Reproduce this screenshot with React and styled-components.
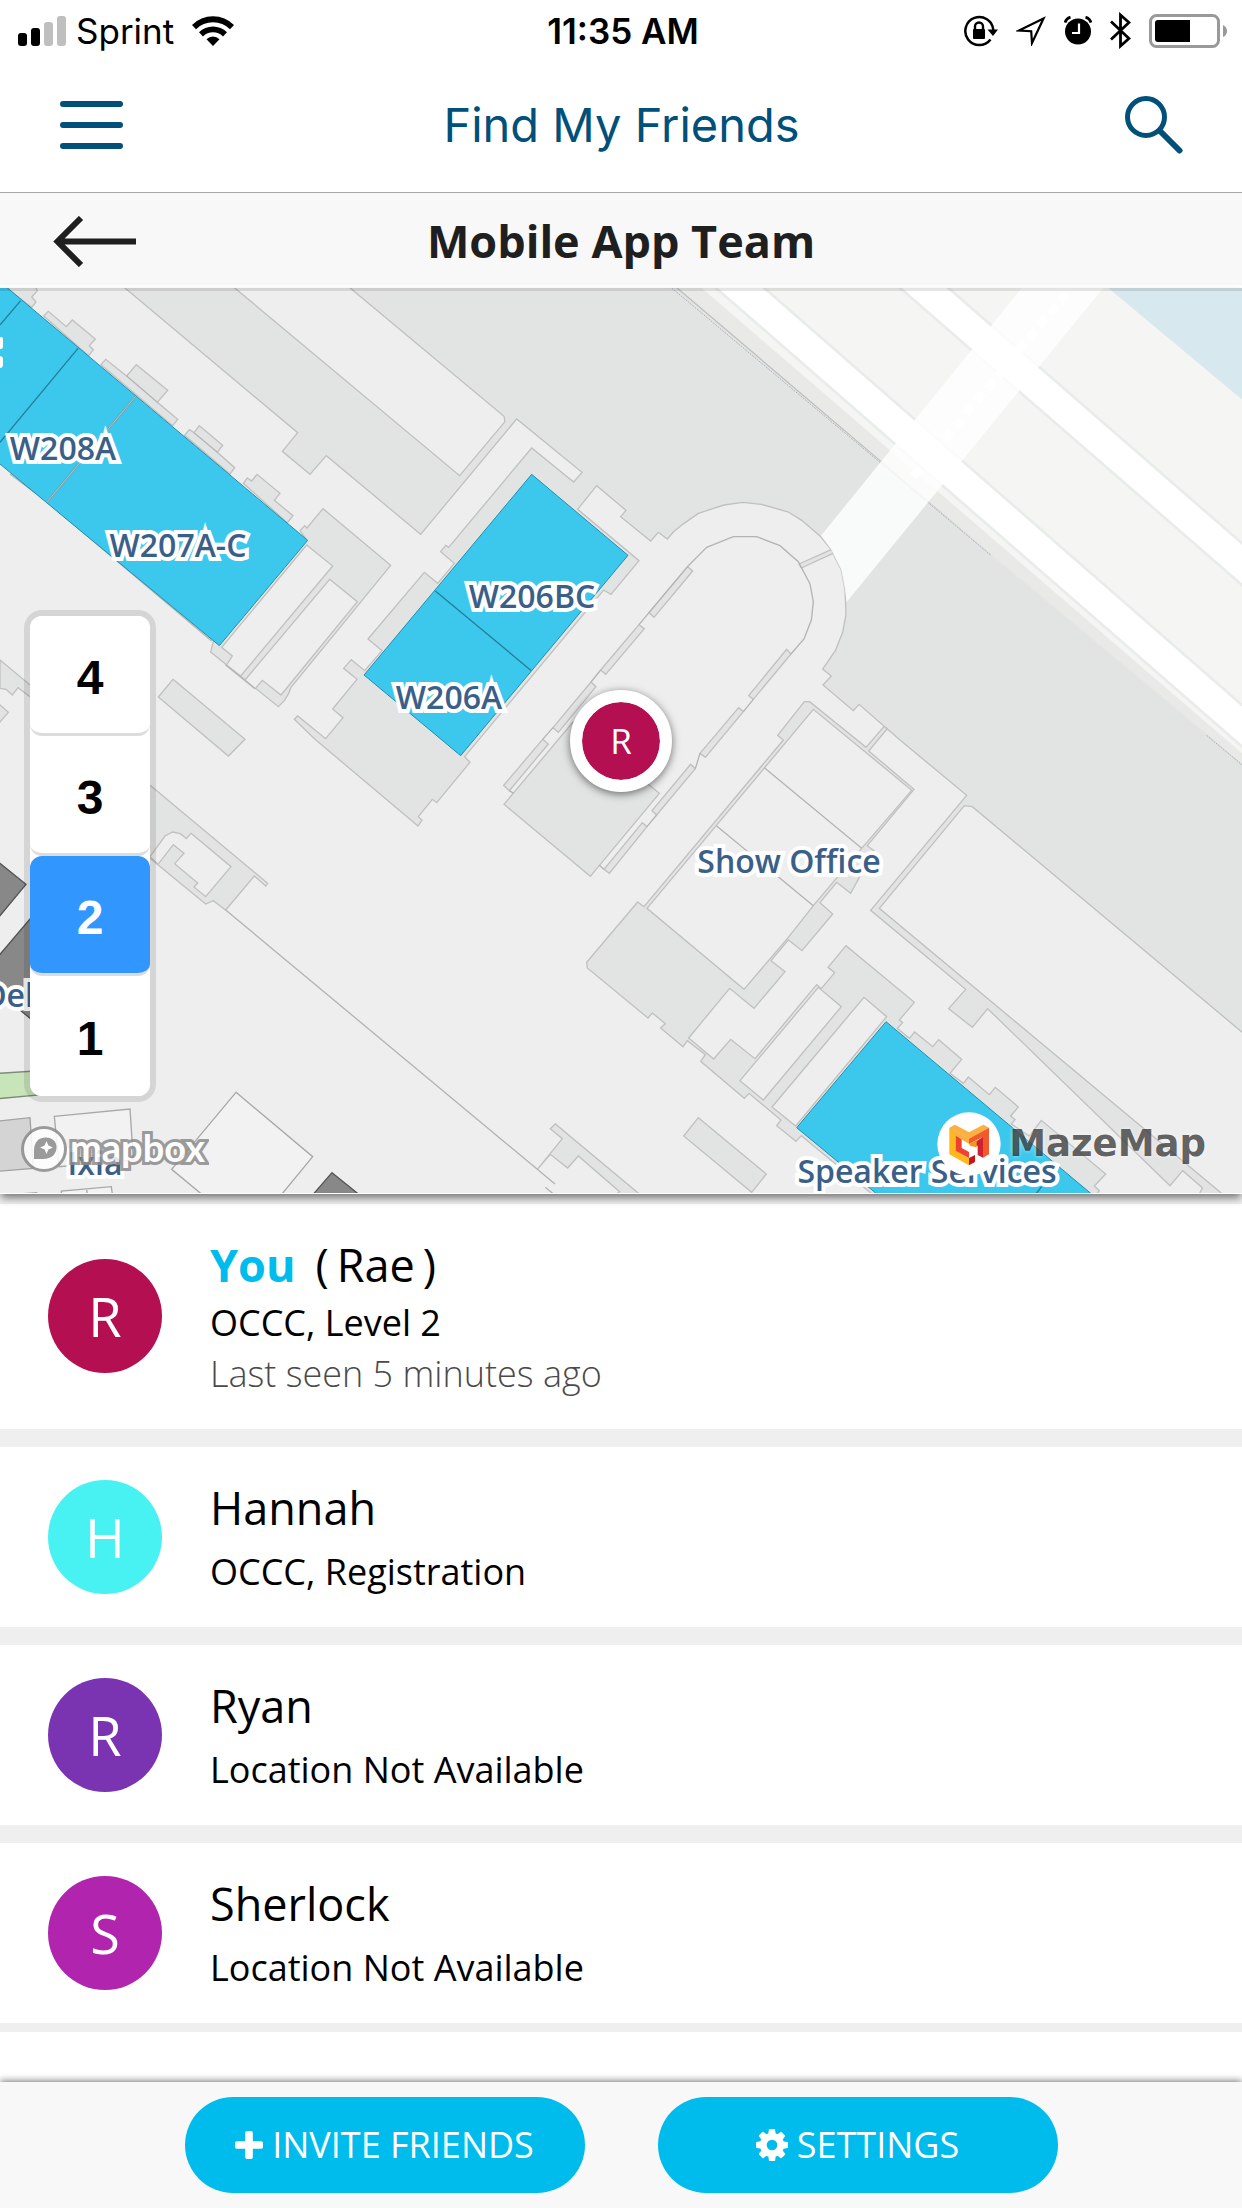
import React, { useState } from "react";
import styled, { createGlobalStyle } from "styled-components";

const GlobalStyle = createGlobalStyle`
  *, *::before, *::after { box-sizing: border-box; }
  html, body { margin: 0; padding: 0; background: #ffffff; }
  body { font-family: "Open Sans", "Noto Sans", sans-serif; color: #000000; }
  button { font: inherit; color: inherit; border: 0; padding: 0; background: none; cursor: pointer; }
  svg { display: block; }
`;

const Screen = styled.div`
  min-height: 100vh;
  display: flex;
  flex-direction: column;
`;

/* ---------- status bar ---------- */

const StatusBar = styled.div`
  height: 57px;
  padding: 4px 14px 0 18px;
  display: grid;
  grid-template-columns: 1fr auto 1fr;
  align-items: center;
  font-family: Inter, Roboto, sans-serif;
  font-size: 35px;
  line-height: 40px;
`;

const StatusGroup = styled.div`
  display: flex;
  align-items: center;
  justify-content: ${(p) => (p.$end ? "flex-end" : "flex-start")};
  gap: ${(p) => p.$gap}px;
`;

const Clock = styled.span`
  font-weight: 600;
`;

const Carrier = styled.span`
  margin: 0 8px 0 0;
`;

/* ---------- headers ---------- */

const AppHeader = styled.header`
  height: 136px;
  padding: 0 59px 0 60px;
  display: grid;
  grid-template-columns: 1fr auto 1fr;
  align-items: center;
  border-bottom: 1px solid #a6a6a6;
  color: #00507a;
`;

const AppTitle = styled.h1`
  margin: 0;
  font-family: Inter, Roboto, sans-serif;
  font-size: 47px;
  line-height: 56px;
  font-weight: 400;
`;

const IconButton = styled.button`
  justify-self: ${(p) => (p.$end ? "end" : "start")};
  display: flex;
`;

const TeamHeader = styled.div`
  height: 95px;
  padding: 4px 53px 0;
  display: grid;
  grid-template-columns: 1fr auto 1fr;
  align-items: center;
  background: #f8f8f8;
  border-bottom: 3px solid #ffffff;
  color: #1f1f1f;
`;

const TeamTitle = styled.h2`
  margin: 0;
  font-size: 45px;
  line-height: 60px;
  font-weight: 700;
`;

/* ---------- map ---------- */

const MapFrame = styled.section`
  position: relative;
  z-index: 1;
  width: 100%;
  aspect-ratio: 1242 / 906;
  box-shadow: 0 5px 8px -1px rgba(0, 0, 0, 0.5);
`;

const MapView = styled.div`
  position: relative;
  width: 100%;
  height: 100%;
  overflow: hidden;
  background: #eeeeee;
  &::after {
    content: "";
    position: absolute;
    inset: 0;
    pointer-events: none;
    border-top: 3px solid rgba(0, 0, 0, 0.1);
    border-bottom: 1px solid #ffffff;
  }
`;

const MapDrawing = styled.svg`
  width: 100%;
  height: 100%;
`;

const RoomLabel = styled.span`
  position: absolute;
  left: ${(p) => p.$x / 12.42}%;
  top: ${(p) => p.$y / 9.06}%;
  transform: translate(-50%, -50%);
  white-space: nowrap;
  font-size: 32px;
  line-height: 44px;
  font-weight: 600;
  color: #3a6089;
  -webkit-text-stroke: 8px #ffffff;
  paint-order: stroke fill;
  stroke-linejoin: round;
`;

const Pin = styled.div`
  position: absolute;
  left: 50%;
  top: 50%;
  width: 102px;
  height: 102px;
  transform: translate(-50%, -50%);
  display: flex;
  align-items: center;
  justify-content: center;
  border: 12px solid #ffffff;
  border-radius: 50%;
  background: #b40f50;
  background-clip: padding-box;
  box-shadow: 0 2px 8px rgba(0, 0, 0, 0.55);
  color: #ffffff;
  font-size: 35px;
  line-height: 48px;
`;

const FloorPicker = styled.div`
  position: absolute;
  left: 30px;
  top: 328px;
  width: 120px;
  display: flex;
  flex-direction: column;
  border-radius: 12px;
  background: #ffffff;
  box-shadow: 0 0 0 6px rgba(0, 0, 0, 0.1);
`;

const FloorButton = styled.button`
  height: 120px;
  padding-top: 6px;
  border-radius: 12px;
  background: ${(p) => (p.$active ? "#3296ff" : "#ffffff")};
  color: ${(p) => (p.$active ? "#ffffff" : "#000000")};
  font-family: "Liberation Sans", Arial, sans-serif;
  font-size: 48px;
  line-height: 56px;
  font-weight: 700;
  &:not(:last-child) {
    border-bottom: 3px solid #dcdcdc;
  }
`;

const MapboxCredit = styled.a`
  position: absolute;
  left: 21px;
  bottom: 21px;
  display: flex;
  align-items: center;
  gap: 3px;
  text-decoration: none;
  opacity: 0.85;
`;

const MapboxName = styled.span`
  padding-bottom: 4px;
  font-family: Lato, sans-serif;
  font-size: 38px;
  line-height: 44px;
  font-weight: 700;
  color: #ffffff;
  -webkit-text-stroke: 6px #8c8c8c;
  paint-order: stroke fill;
  stroke-linejoin: round;
`;

const MazeCredit = styled.a`
  position: absolute;
  right: 36px;
  bottom: 18px;
  display: flex;
  align-items: center;
  gap: 8px;
  text-decoration: none;
`;

const MazeName = styled.span`
  font-family: "DejaVu Sans", sans-serif;
  font-size: 37px;
  line-height: 48px;
  font-weight: 700;
  color: rgba(0, 0, 0, 0.62);
  text-shadow: 0 0 4px rgba(255, 255, 255, 0.6);
`;

/* ---------- friends ---------- */

const FriendList = styled.ul`
  flex: 1;
  margin: 0;
  padding: 10px 0 0;
  list-style: none;
  display: flex;
  flex-direction: column;
  gap: 18px;
  background: #efefef;
`;

const FriendRow = styled.li`
  display: flex;
  align-items: center;
  gap: 48px;
  min-height: 180px;
  padding: 29px 48px 30px;
  background: #ffffff;
`;

const YouRow = styled(FriendRow)`
  min-height: 225px;
`;

const ListEnd = styled.li`
  flex: 1;
  margin-top: -9px;
  background: #ffffff;
`;

const Avatar = styled.div`
  flex: none;
  width: 114px;
  height: 114px;
  display: flex;
  align-items: center;
  justify-content: center;
  border-radius: 50%;
  background: ${(p) => p.$color};
  color: #ffffff;
  font-size: 54px;
  line-height: 72px;
`;

const FriendText = styled.div`
  display: flex;
  flex-direction: column;
  gap: ${(p) => (p.$tight ? 0 : 6)}px;
`;

const FriendName = styled.div`
  display: flex;
  gap: 8px;
  font-size: 45px;
  line-height: 64px;
`;

const You = styled.strong`
  margin-right: 12px;
  color: #00bcec;
  font-weight: 700;
`;

const FriendDetail = styled.div`
  font-size: 36px;
  line-height: 51px;
  font-weight: ${(p) => (p.$faint ? 300 : 400)};
  color: ${(p) => (p.$faint ? "#4a4a4a" : "#000000")};
`;

/* ---------- footer ---------- */

const ActionBar = styled.footer`
  position: sticky;
  bottom: 0;
  z-index: 1;
  height: 126px;
  display: flex;
  align-items: center;
  justify-content: center;
  gap: 73px;
  background: #f8f8f8;
  box-shadow: 0 -1px 7px rgba(0, 0, 0, 0.55);
`;

const ActionButton = styled.button`
  width: 400px;
  height: 96px;
  display: flex;
  align-items: center;
  justify-content: center;
  gap: 9px;
  border-radius: 48px;
  background: #00bcec;
  color: #ffffff;
  font-size: 36px;
  line-height: 48px;
  font-weight: 400;
`;

/* ---------- icons ---------- */

const SignalIcon = () => (
  <svg width="48" height="30" viewBox="0 0 48 30" aria-hidden="true">
    <rect x="0" y="17" width="9" height="13" rx="3" />
    <rect x="13" y="12" width="9" height="18" rx="3" />
    <rect x="26" y="6" width="9" height="24" rx="3" fill="#bfbfbf" />
    <rect x="39" y="0" width="9" height="30" rx="3" fill="#bfbfbf" />
  </svg>
);

const WifiIcon = () => (
  <svg width="42" height="30" viewBox="0 0 42 30" aria-hidden="true">
    <path d="M21 30 L14.500 23.300 A9.200 9.200 0 0 1 27.500 23.300 Z" />
    <path d="M7 16.200 A19.800 19.800 0 0 1 35 16.200 L31 20.400 A14.200 14.200 0 0 0 11 20.400 Z" />
    <path d="M0 9 A29.700 29.700 0 0 1 42 9 L38 13.200 A24.200 24.200 0 0 0 4 13.200 Z" />
  </svg>
);

const RotationLockIcon = () => (
  <svg width="34" height="32" viewBox="0 0 34 32" aria-hidden="true">
    <path d="M29.300 15 A14 14 0 1 0 26.500 24.500" fill="none" stroke="#000" strokeWidth="2.500" />
    <path d="M23.500 14.500 H34 L29 21 Z" />
    <rect x="9" y="14" width="12" height="10" rx="1" />
    <path d="M11 15 V11.500 A4 4 0 0 1 19 11.500 V15" fill="none" stroke="#000" strokeWidth="2.400" />
  </svg>
);

const LocationIcon = () => (
  <svg width="30" height="30" viewBox="0 0 30 30" aria-hidden="true">
    <path d="M27.500 2.500 L3 14.500 L15.200 15.200 L16 27 Z" fill="none" stroke="#000" strokeWidth="2.200" />
  </svg>
);

const AlarmIcon = () => (
  <svg width="28" height="29" viewBox="0 0 28 29" aria-hidden="true">
    <circle cx="14" cy="15.500" r="13" />
    <path d="M1 6.500 A8 8 0 0 1 6.500 1.200 M27 6.500 A8 8 0 0 0 21.500 1.200" fill="none" stroke="#000" strokeWidth="2.800" />
    <path d="M15 7.500 V17 H8" fill="none" stroke="#fff" strokeWidth="2.200" />
  </svg>
);

const BluetoothIcon = () => (
  <svg width="21" height="37" viewBox="0 0 21 37" aria-hidden="true">
    <path d="M1 9.500 L19 26.500 L10.500 34 V3 L19 10.500 L1 27.500" fill="none" stroke="#000" strokeWidth="2.800" />
  </svg>
);

const BatteryIcon = () => (
  <svg width="79" height="34" viewBox="0 0 79 34" aria-hidden="true">
    <rect x="1.500" y="1.500" width="68" height="31" rx="6" fill="none" stroke="#999" strokeWidth="3" />
    <path d="M74 11 Q78 13 78 17 Q78 21 74 23 Z" fill="#999" />
    <path d="M9 6 H41 V28 H9 Q6 28 6 25 V9 Q6 6 9 6 Z" />
  </svg>
);

const MenuIcon = () => (
  <svg width="64" height="48" viewBox="0 0 64 48" aria-hidden="true">
    <path d="M3 3 H60 M3 24 H60 M3 45 H60" stroke="currentColor" strokeWidth="6" strokeLinecap="round" />
  </svg>
);

const SearchIcon = () => (
  <svg width="58" height="58" viewBox="0 0 58 58" aria-hidden="true">
    <circle cx="21" cy="21" r="18.500" fill="none" stroke="currentColor" strokeWidth="5" />
    <path d="M35 35 L54.500 54.500" stroke="currentColor" strokeWidth="6" strokeLinecap="round" />
  </svg>
);

const BackIcon = () => (
  <svg width="83" height="51" viewBox="0 0 83 51" aria-hidden="true">
    <path d="M28 2 L4.500 25.500 L28 49 M6 25.500 H83" fill="none" stroke="currentColor" strokeWidth="6" />
  </svg>
);

const PlusIcon = () => (
  <svg width="28" height="28" viewBox="192 128 1408 1408" aria-hidden="true">
    <path fill="currentColor" d="M1600 736v192q0 40-28 68t-68 28h-416v416q0 40-28 68t-68 28h-192q-40 0-68-28t-28-68v-416h-416q-40 0-68-28t-28-68v-192q0-40 28-68t68-28h416v-416q0-40 28-68t68-28h192q40 0 68 28t28 68v416h416q40 0 68 28t28 68z" />
  </svg>
);

const CogIcon = () => (
  <svg width="32" height="32" viewBox="0 128 1536 1536" aria-hidden="true">
    <path fill="currentColor" d="M1024 896q0-106-75-181t-181-75-181 75-75 181 75 181 181 75 181-75 75-181zm512-109v222q0 12-8 23t-20 13l-185 28q-19 54-39 91 35 50 107 138 10 12 10 25t-9 23q-27 37-99 108t-94 71q-12 0-26-9l-138-108q-44 23-91 38-16 136-29 186-7 28-36 28h-222q-14 0-24.500-8.500t-11.500-21.500l-28-184q-49-16-90-37l-141 107q-10 9-25 9-14 0-25-11-126-114-165-168-7-10-7-23 0-12 8-23 15-21 51-66.500t54-70.500q-27-50-41-99l-183-27q-13-2-21-12.500t-8-23.500v-222q0-12 8-23t19-13l186-28q14-46 39-92-40-57-107-138-10-12-10-24 0-10 9-23 26-36 98.500-107.500t94.500-71.500q13 0 26 10l138 107q44-23 91-38 16-136 29-186 7-28 36-28h222q14 0 24.500 8.500t11.500 21.500l28 184q49 16 90 37l142-107q9-9 24-9 13 0 25 10 129 119 165 170 7 8 7 22 0 12-8 23-15 21-51 66.500t-54 70.500q26 50 41 98l183 28q13 2 21 12.500t8 23.500z" />
  </svg>
);

const MapboxMark = () => (
  <svg width="46" height="46" viewBox="0 0 46 46" aria-hidden="true">
    <circle cx="23" cy="23" r="21.500" fill="#fff" stroke="#8c8c8c" strokeWidth="3" />
    <path d="M13 33 V24 C13 16 18 11.500 25 11.500 C31 11.500 35.500 15.500 35.500 21 C35.500 28 31 33 22 33 Z" fill="#8c8c8c" />
    <path d="M25.500 15 L27.400 19.600 L32 21.500 L27.400 23.400 L25.500 28 L23.600 23.400 L19 21.500 L23.600 19.600 Z" fill="#fff" />
  </svg>
);

const MazeMark = () => (
  <svg width="64" height="64" viewBox="356 1116 192 192" aria-hidden="true">
    <circle cx="452" cy="1212" r="95" fill="#fff" />
    <path fill="#ffb81c" d="M393 1163 L412 1174 V1231 L452 1254 V1276 L393 1243 Z" />
    <path fill="#ee4136" d="M412 1176 L430 1186 V1224 L452 1236 V1254 L412 1232 Z" />
    <path fill="#fbb040" d="M393 1163 L410 1154 L452 1177 L495 1154 L512 1163 L452 1197 Z" />
    <path fill="#fbb040" d="M393 1163 L452 1196 V1212 L412 1187 Z" />
    <path fill="#f15a29" d="M452 1196 L512 1163 V1243 L494 1253 V1190 L452 1212 Z" />
    <path fill="#d1202f" d="M494 1190 V1253 L478 1245 V1218 L462 1212 Z" />
    <path fill="#f7941d" d="M452 1212 L475 1200 V1222 L456 1218 Z" />
    <path fill="#c4161c" d="M452 1254 L470 1245 V1266 L452 1276 Z" />
  </svg>
);

/* Floor geometry, drawn in thirds of a map pixel. */

const DARK_AREAS = [
  "375,24 893,458 847,514 930,583 979,527 1262,763 1550,417 1746,577 1721,606 1595,504 1346,802 1337,796 1322,815 1363,850 1313,910 1273,877 1104,1077 1146,1112 1094,1172 1054,1139 1031,1165 1071,1198 998,1287 1029,1313 977,1376 893,1308 883,1318 945,1378 1254,1638 1266,1620 1255,1610 1297,1558 1310,1568 1410,1447 1394,1430 1811,930 1833,943 1917,842 1733,688 1790,617 1878,691 1862,710 1952,783 1975,757 2002,777 2020,756 2048,733 2095,700 2172,675 2228,667 2284,673 2365,696 2405,721 2461,769 2493,808 2524,870 2535,928 2538,1003 2528,1057 2506,1112 2468,1167 2494,1188 2469,1215 2560,1292 2577,1273 2700,1380 2900,1546 2612,1891 2897,2128 2846,2186 2917,2242 2963,2186 3510,2717 3548,2672 3607,2723 3590,2760 3680,2760 3667,2742 2638,1885 2893,1577 2917,1580 3740,2268 3740,1466 2972,825 2015,10 360,10",
  "1913,1866 1932,1880 2350,1380 2333,1366 2413,1265 2429,1265 2598,1402 2652,1340 2662,1346 2606,1413 2742,1528 2602,1697 2622,1712 2552,1840 2510,1807 2460,1868 2498,1902 2406,2012 2365,1980 2313,2042 2355,2075 2262,2185 2189,2125 2066,2274 2141,2337 2192,2278 2265,2336 2450,2114 2464,2126 2504,2078 2484,2062 2538,1997 2743,2167 2698,2220 2708,2228 2692,2245 2728,2275 2744,2256 2798,2300 2816,2279 2885,2338 2850,2380 2890,2410 2905,2391 2968,2444 2986,2422 3055,2481 3032,2508 3045,2519 3034,2532 3088,2568 3124,2521 3317,2682 3283,2718 3298,2732 3270,2770 2650,2770 2404,2567 2388,2584 2330,2537 2343,2520 2247,2440 2233,2455 2102,2344 2116,2324 2062,2282 2049,2300 1982,2244 1996,2231 1957,2199 1944,2214 1762,2064 1760,2047",
  "1651,2546 1666,2532 1918,2742 1850,2742 1859,2735 1735,2628 1703,2664 1651,2623 1612,2668 1687,2576",
  "2095,2513 2299,2682 2255,2737 2051,2568",
  "0,1140 803,1810 797,1818 763,1788 677,1890 640,1862 617,1872 450,1735 90,1250 54,1223 37,1245 18,1228 0,1225",
  "-5,1270 25,1297 -5,1332",
  "519,1198 735,1378 685,1428 475,1251",
  "900,752 914,737 921,744 969,686 1172,856 873,1222 866,1240 853,1262 835,1280 632,1116 640,1085 920,780",
  "20,24 95,82 108,66 95,51 112,32 100,10",
  "131,108 145,94 199,140 217,120 286,177 268,197 280,209 266,227",
  "303,254 317,238 380,288 409,254 503,331 472,367 533,418 518,437",
  "554,466 568,449 582,458 598,437 668,496 652,517 704,563 690,582",
  "730,610 742,594 755,603 771,583 840,640 823,661 879,707 862,728",
];

const LIGHT_ROOMS = [
  "690,12 1379,587 1515,425 1512,409 1036,12",
  "1941,1885 2365,1378 2440,1288 2595,1415 2735,1531 2585,1705 2440,1877 2365,1972 2232,2128",
  "2220,2402 2455,2122 2524,2180 2290,2460",
  "2316,2481 2592,2152 2660,2210 2387,2538",
  "573,1660 693,1760 617,1850 582,1821 593,1809 524,1751 552,1720 520,1694 474,1753 450,1730 495,1668 518,1656 541,1661 559,1676",
  "920,795 998,858 722,1188 680,1155 697,1128 665,1102",
  "989,898 1072,965 843,1245 787,1201 766,1226 735,1200",
];

const ALCOVES = [
  "2063,860 2078,873 1962,1012 1947,998",
  "1917,1034 1933,1046 1817,1183 1802,1170",
  "1773,1206 1788,1220 1675,1357 1659,1343",
  "1628,1378 1645,1392 1528,1532 1511,1516",
  "2360,1108 2373,1122 2260,1258 2246,1247",
  "2216,1283 2230,1295 2116,1432 2100,1420",
  "2072,1453 2086,1466 1970,1605 1956,1592",
  "1927,1628 1941,1640 1828,1780 1812,1768",
  "1512,1573 1771,1789 1978,1540 1719,1326",
  "2397,852 2495,808 2499,820 2404,864",
];

const WALLS =
  "M2065 857 L2120 802 L2200 770 L2270 770 L2340 797 L2395 845 L2430 912 L2440 965 L2434 1020 L2412 1077 L2373 1122 M2065 857 L1947 998 L1917 1034 M1802 1170 L1773 1206 M1659 1343 L1628 1378 M2260 1258 L2230 1295 M2100 1420 L2086 1466 M1970 1605 L1941 1640 M1528 1532 L1541 1540 M1798 1756 L1812 1768 M2293 1463 L2585 1705 M2150 1638 L2440 1877 M677 1890 L1612 2668 L1665 2712 M1636 2722 L1670 2750 M677 1155 L765 1226 M30 582 L142 667 L635 1083 M380 288 L472 367 M582 458 L652 517";

const BLUE_ROOMS = [
  "-5,5 0,5 923,781 658,1097 -5,548",
  "1595,583 1884,826 1382,1427 1092,1185",
  "2658,2225 3290,2755 2646,2755 2390,2543",
];

const FloorPlan = () => (
  <MapDrawing viewBox="0 0 3726 2718" preserveAspectRatio="xMidYMid slice" aria-hidden="true">
    <g transform="translate(0 -24)">
      <rect width="3726" height="2760" fill="#eeeeee" />
      <path d="M2015 24 H3726 V1455 Z" fill="#e9e9e7" />
      <path d="M2105 24 H3726 V1420 Z" fill="#f5f5f3" />
      <path d="M3325 10 H3740 V370 L3325 24 Z" fill="#d7e8ee" />
      <g fill="#ffffff" stroke="#e8ecea" strokeWidth="8">
        <path d="M2132 10 L3740 1412 V1287 L2277 10 Z" />
        <path d="M2684 10 L3740 927 V802 L2829 10 Z" />
      </g>
      <g fill="#e2e4e3" stroke="#c0c0c0" strokeWidth="4">
        {DARK_AREAS.map((p) => <polygon key={p} points={p} />)}
      </g>
      <g fill="#eeeeee" stroke="#c0c0c0" strokeWidth="4">
        {LIGHT_ROOMS.map((p) => <polygon key={p} points={p} />)}
      </g>
      <g fill="#e2e4e3" stroke="#c0c0c0" strokeWidth="4">
        {ALCOVES.map((p) => <polygon key={p} points={p} />)}
      </g>
      <path d={WALLS} fill="none" stroke="#b4b4b4" strokeWidth="4" />
      <path d="M2015 24 L2972 825 L3740 1466" fill="none" stroke="#e6e7e6" strokeWidth="5" />
      <path d="M2015 24 L2972 825 M3620 1366 L3740 1466" fill="none" stroke="#8d93a3" strokeWidth="2" strokeDasharray="6 3" />
      <path d="M3077 10 H3321 L2540 966 L2535 928 L2524 870 L2493 808 L2463 767 Z" fill="#ffffff" opacity="0.8" />
      <path d="M3200 40 L2740 590" stroke="#ffffff" strokeWidth="26" strokeDasharray="30 19" fill="none" />
      <g fill="#3cc7ed" stroke="#248fae" strokeWidth="3">
        {BLUE_ROOMS.map((p) => <polygon key={p} points={p} />)}
      </g>
      <path d="M62 62 L0 135 M234 205 L0 487 M1306 933 L1594 1172 M3125 2720 L3105 2745" stroke="#247f99" strokeWidth="4" />
      <path d="M407 349 L142 665" stroke="#7c9aa2" strokeWidth="6" />
      <path d="M407 349 L142 665" stroke="#cfd6d8" strokeWidth="2" />
      <path d="M0 211 H4 Q9 211 9 217 V240 Q9 246 0 248 Z M0 268 Q9 270 9 277 V294 Q9 302 0 304 Z" transform="translate(0 -40)" fill="#ffffff" />

      <g transform="translate(0 1380)" strokeWidth="4">
        <g fill="#888888" stroke="#555555">
          <path d="M-5 366 L78 433 L-5 533 Z" />
          <path d="M-5 649 L100 525 V843 L-5 757 Z" />
          <path d="M996 1298 L1090 1374 H930 Z" />
        </g>
        <path d="M-5 1000 L150 990 V1062 L-5 1076 Z" fill="#c8e5b9" stroke="#7d8c78" />
        <path d="M-5 1143 L90 1133 L100 1285 L-5 1294 Z" fill="#d4d4d4" stroke="#a2a2a2" />
        <g fill="#f2f2f2" stroke="#a8a8a8">
          <path d="M163 1129 L390 1107 L400 1260 L177 1280 Z" />
          <path d="M708 1057 L938 1250 L836 1374 H619 L515 1288 Z" />
          <path d="M184 1370 V1353 L334 1340 L338 1370 M260 1346 L262 1370 M40 1363 L112 1358" />
        </g>
      </g>
    </g>
  </MapDrawing>
);

const LABELS = [
  { text: "W208A", x: 63, y: 160 },
  { text: "W207A-C", x: 178, y: 257 },
  { text: "W206BC", x: 532, y: 308 },
  { text: "W206A", x: 449, y: 409 },
  { text: "Show Office", x: 789, y: 573 },
  { text: "Speaker Services", x: 927, y: 883 },
  { text: "Ixia", x: 95, y: 875 },
  { text: "Dell", x: 13, y: 707 },
];

const FRIENDS = [
  { name: "Rae", you: true, color: "#b40f50", place: "OCCC, Level 2", seen: "Last seen 5 minutes ago" },
  { name: "Hannah", color: "#48f2f2", place: "OCCC, Registration" },
  { name: "Ryan", color: "#7b34b1", place: "Location Not Available" },
  { name: "Sherlock", color: "#b124ae", place: "Location Not Available" },
];

function Friend({ name, you, color, place, seen }) {
  const Row = you ? YouRow : FriendRow;
  return (
    <Row>
      <Avatar $color={color}>{name[0]}</Avatar>
      <FriendText $tight={Boolean(seen)}>
        <FriendName>
          {you ? (
            <>
              <You>You</You>
              <span>(</span>
              <span>{name}</span>
              <span>)</span>
            </>
          ) : (
            name
          )}
        </FriendName>
        <FriendDetail>{place}</FriendDetail>
        {seen && <FriendDetail $faint>{seen}</FriendDetail>}
      </FriendText>
    </Row>
  );
}

export default function App() {
  const [floor, setFloor] = useState(2);
  return (
    <Screen>
      <GlobalStyle />
      <StatusBar>
        <StatusGroup $gap={10}>
          <SignalIcon />
          <Carrier>Sprint</Carrier>
          <WifiIcon />
        </StatusGroup>
        <Clock>11:35 AM</Clock>
        <StatusGroup $end $gap={18}>
          <RotationLockIcon />
          <LocationIcon />
          <AlarmIcon />
          <BluetoothIcon />
          <BatteryIcon />
        </StatusGroup>
      </StatusBar>
      <AppHeader>
        <IconButton aria-label="Menu"><MenuIcon /></IconButton>
        <AppTitle>Find My Friends</AppTitle>
        <IconButton $end aria-label="Search"><SearchIcon /></IconButton>
      </AppHeader>
      <TeamHeader>
        <IconButton aria-label="Back"><BackIcon /></IconButton>
        <TeamTitle>Mobile App Team</TeamTitle>
      </TeamHeader>
      <MapFrame>
        <MapView>
          <FloorPlan />
          {LABELS.map((l) => (
            <RoomLabel key={l.text} $x={l.x} $y={l.y}>{l.text}</RoomLabel>
          ))}
          <Pin>R</Pin>
          <FloorPicker>
            {[4, 3, 2, 1].map((n) => (
              <FloorButton key={n} $active={n === floor} aria-pressed={n === floor} onClick={() => setFloor(n)}>
                {n}
              </FloorButton>
            ))}
          </FloorPicker>
          <MapboxCredit href="#mapbox">
            <MapboxMark />
            <MapboxName>mapbox</MapboxName>
          </MapboxCredit>
          <MazeCredit href="#mazemap">
            <MazeMark />
            <MazeName>MazeMap</MazeName>
          </MazeCredit>
        </MapView>
      </MapFrame>
      <FriendList>
        {FRIENDS.map((f) => <Friend key={f.name} {...f} />)}
        <ListEnd aria-hidden="true" />
      </FriendList>
      <ActionBar>
        <ActionButton><PlusIcon />INVITE FRIENDS</ActionButton>
        <ActionButton><CogIcon />SETTINGS</ActionButton>
      </ActionBar>
    </Screen>
  );
}
